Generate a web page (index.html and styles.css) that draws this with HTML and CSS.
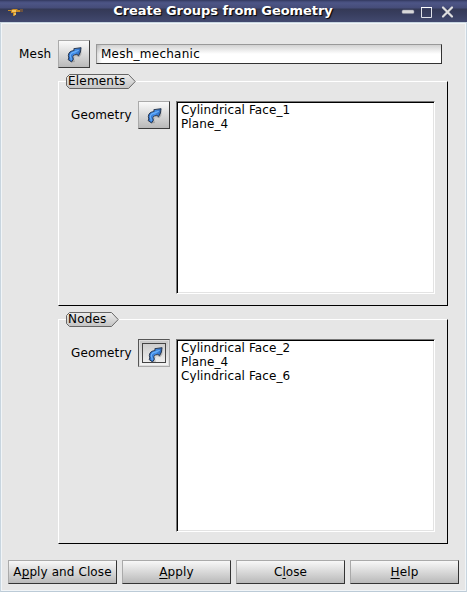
FILE: index.html
```
<!DOCTYPE html>
<html lang="en">
<head>
<meta charset="utf-8">
<title>Create Groups from Geometry</title>
<link rel="stylesheet" href="styles.css">
</head>
<body>
<svg class="defs" width="0" height="0">
  <defs>
    <linearGradient id="blue" x1="0" y1="0" x2="1" y2="0"><stop offset="0" stop-color="#2462bd"/><stop offset=".5" stop-color="#4592ee"/><stop offset="1" stop-color="#2a63b2"/></linearGradient>
    <linearGradient id="silver" x1="0" y1="0" x2="0" y2="1"><stop offset="0" stop-color="#ececec"/><stop offset="1" stop-color="#c3c3c3"/></linearGradient>
    <symbol id="pick" viewBox="0 0 16 16">
      <path d="M5 15.5L8.5 15L7.5 12L9 9.5L12.5 10.5L14.5 8V4L12 3Z" fill="#000" opacity=".18"/>
      <path d="M5.2 15L2 12.8Q3.2 11.6 2.2 9Q2.3 4.8 7.6 4.3L7.4 2.5L14.2 1.6L13.6 5.6L11.8 9.2L10.2 7.8Q6.4 8.2 6.4 10.2Q8 12.4 5.2 15Z" fill="url(#blue)" stroke="#263348" stroke-width=".9" stroke-linejoin="round"/>
      <path d="M4.5 13Q5.4 12 4 9.5Q4 6.3 8.6 5.6L12 4" fill="none" stroke="#69b0fa" stroke-width="1.2"/>
    </symbol>
  </defs>
</svg>
<div class="window">
  <header class="titlebar">
    <svg class="app-icon" width="16" height="12" viewBox="0 0 16 12"><path d="M0 3H3L5 2H9L10 3H12V5H8V8H7V9H5V6H3V4H0Z" fill="#c88b25"/><path d="M4 3H8V5H4Z" fill="#f5c25a"/><path d="M12 2h3v3h-3z" fill="#6b5140"/><path d="M7 6v2" stroke="#fff0a0"/></svg>
    <h1>Create Groups from Geometry</h1>
    <svg class="controls" width="56" height="14" viewBox="0 0 56 14">
      <rect x="2" y="5" width="12" height="3.6" rx="1.4" fill="#d8d8d8" stroke="#8b8ca0" stroke-width=".5"/>
      <path d="M21.5 2.5h10v10h-10z" fill="none" stroke="#dfe1e8"/><path d="M21 2.5h11" stroke="#fff"/>
      <path d="M43 2.5L52 11.5M52 2.5L43 11.5" stroke="#dedede" stroke-width="2.2" stroke-linecap="round"/>
    </svg>
  </header>
  <main class="content">
    <div class="mesh-row">
      <label class="caption">Mesh</label>
      <button class="pick"><svg width="17" height="17"><use href="#pick"/></svg></button>
      <div class="field">Mesh_mechanic</div>
    </div>
    <section class="group">
      <div class="tag tag-elements"><svg width="70" height="16" viewBox="0 0 70 16"><path d="M3.5 .5H62.5L69.2 7.5L62.5 14.5H3.5L.5 11.5V3.5Z" fill="url(#silver)" stroke="#666"/></svg><span>Elements</span></div>
      <div class="group-row">
        <label class="caption">Geometry</label>
        <button class="pick"><svg width="17" height="17"><use href="#pick"/></svg></button>
        <div class="list"><div>Cylindrical Face_1</div><div>Plane_4</div></div>
      </div>
    </section>
    <section class="group">
      <div class="tag tag-nodes"><svg width="53" height="16" viewBox="0 0 53 16"><path d="M3.5 .5H45.5L52.2 7.5L45.5 14.5H3.5L.5 11.5V3.5Z" fill="url(#silver)" stroke="#666"/></svg><span>Nodes</span></div>
      <div class="group-row">
        <label class="caption">Geometry</label>
        <button class="pick pressed"><svg width="17" height="17"><use href="#pick"/></svg></button>
        <div class="list"><div>Cylindrical Face_2</div><div>Plane_4</div><div>Cylindrical Face_6</div></div>
      </div>
    </section>
    <footer class="actions">
      <button>A<u>p</u>ply and Close</button>
      <button><u>A</u>pply</button>
      <button>C<u>l</u>ose</button>
      <button><u>H</u>elp</button>
    </footer>
  </main>
</div>
</body>
</html>
```
FILE: styles.css
```
* { box-sizing: border-box; }
body { margin: 0; font: 12px/14px "DejaVu Sans", sans-serif; color: #000; }
.defs { position: absolute; }
.window { width: 467px; height: 592px; display: flex; flex-direction: column; background: #e6e6e6; overflow: hidden; }
.titlebar {
  height: 22px; flex: none; display: flex; align-items: center; padding: 0 11px 0 8px;
  background: linear-gradient(#30365a 0, #3f4672 1px, #4d5586 3px, #454c78 8px, #343956 9px, #383e5f 14px, #42496f 22px);
}
.app-icon { width: 16px; margin-top: 4px; }
.titlebar h1 { flex: 1; margin: 0; padding-left: 22px; text-align: center; font-size: 13px; line-height: 20px; letter-spacing: -.05px; color: #fff; text-shadow: 1px 1px 1px #000; white-space: nowrap; }
.controls { margin-top: 2px; }
.content {
  flex: 1; display: flex; flex-direction: column; padding: 16px 6px 5px;
  border: 1px solid #c8d5df; border-bottom-color: #bccbd7;
  box-shadow: inset 0 0 0 1px #f1f5f8;
}
.mesh-row { display: flex; height: 29px; align-items: flex-start; margin-top: 1px; }
.mesh-row .caption { width: 51px; padding: 7px 0 0 12px; letter-spacing: .2px; }
.pick {
  width: 32px; height: 28px; flex: none; padding: 0; display: flex; align-items: center; justify-content: center;
  border: 1px solid; border-color: #aaa #3c3c3c #3c3c3c #aaa; background: linear-gradient(#fafafa, #b9b9b9);
}
.pressed { border-color: #555 #aaa #aaa #555; background: linear-gradient(#c6c6c6, #f5f5f5); box-shadow: inset 0 0 0 1px #ddd; position: relative; }
.pressed svg { position: relative; left: 1px; top: 1px; }
.pressed::after { content: ""; position: absolute; inset: 3px; border: 1px solid #444; }
.field {
  width: 346px; height: 20px; margin: 4px 0 0 6px; padding: 2px 4px; letter-spacing: .25px;
  border: 1px solid; border-color: #999 #333 #333 #999;
  background: linear-gradient(90deg, #0002, transparent 5px), linear-gradient(#d2d2d2, #fff 9px);
}
.group {
  position: relative; width: 390px; height: 225px; margin: 12px 0 0 51px; padding: 19px 12px 0;
  border: 1px solid; border-color: #fff #000 #000 #fff;
}
.group + .group { margin-top: 13px; }
.tag { position: absolute; left: 7px; top: -8px; height: 16px; letter-spacing: .2px; }
.tag svg { position: absolute; left: 0; top: 0; }
.tag span { position: relative; left: 2px; top: 0; }
.group-row { display: flex; align-items: flex-start; }
.group-row .caption { width: 67px; padding-top: 7px; letter-spacing: .1px; }
.list {
  width: 259px; height: 193px; margin-left: 6px; padding: 1px 4px; background: #fff; letter-spacing: .1px;
  border: 1px solid; border-color: #777 #fff #fff #777;
  box-shadow: inset 1px 1px #000, inset -1px -1px #e3e3e3;
}
.actions { display: flex; gap: 5px; margin: 16px 0 0 1px; }
.actions button {
  width: 109px; height: 24px; padding: 0; font: inherit; letter-spacing: .1px; color: #000; white-space: nowrap;
  border: 1px solid; border-color: #aaa #333 #333 #aaa; background: linear-gradient(#f8f8f8, #b9b9b9);
}
u { text-underline-offset: 2px; text-decoration-skip-ink: none; }
```
